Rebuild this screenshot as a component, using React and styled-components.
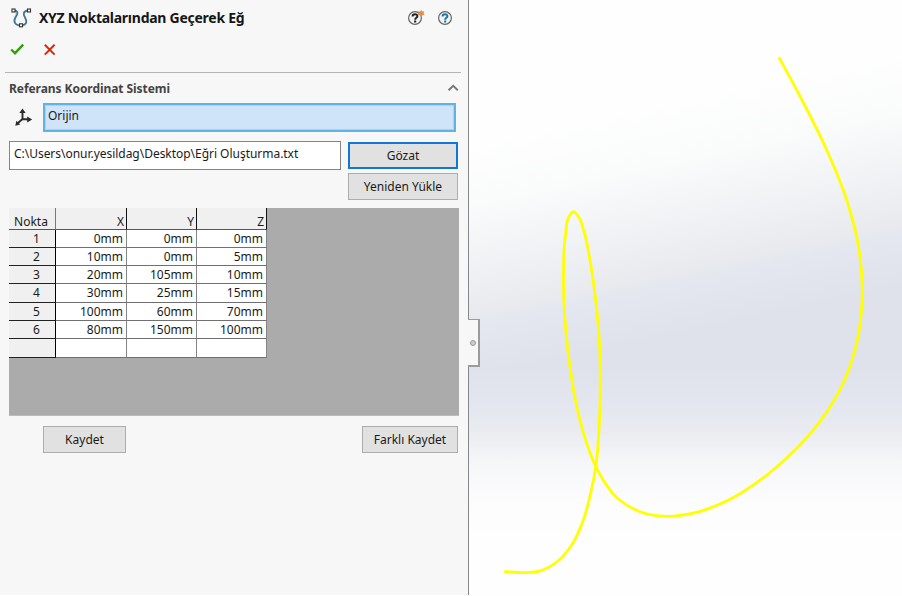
import React, { useState } from 'react'
import styled, { createGlobalStyle } from 'styled-components'

const GlobalStyle = createGlobalStyle`
  * {
    box-sizing: border-box;
  }

  body {
    margin: 0;
    background: #fff;
    font-family: "Noto Sans", "Open Sans", sans-serif;
    font-size: 12px;
    color: #1a1a1a;
    overflow: hidden;
  }
`

const Window = styled.div`
  display: flex;
  width: 902px;
  height: 596px;
`

const Panel = styled.section`
  width: 469px;
  height: 595px;
  background: #f7f7f7;
  border-right: 1px solid #85878a;
`

const Header = styled.header`
  display: flex;
  align-items: center;
  height: 36px;
  padding-left: 10px;
`

const Title = styled.h1`
  flex: 1;
  margin: 0 0 0 7px;
  font-size: 14px;
  line-height: 20px;
  font-weight: 700;
  letter-spacing: ${(props) => props.$spacing};
  white-space: nowrap;
  color: #161616;
`

const HelpIcons = styled.div`
  display: flex;
  gap: 10px;
  padding: 0 12px 2px 0;
`

const Actions = styled.div`
  display: flex;
  gap: 18px;
  height: 37px;
  margin: 0 7px 0 5px;
  padding: 6px 0 0 5px;
  border-bottom: 1px solid #b5b5b5;
`

const IconButton = styled.button`
  width: 15px;
  height: 15px;
  padding: 0;
  border: 0;
  background: none;
  line-height: 0;
`

const SectionTitle = styled.div`
  display: flex;
  align-items: center;
  justify-content: space-between;
  height: 30px;
  padding: 0 9px;
  font-weight: 700;
  letter-spacing: -0.06px;
  color: #444;
`

const SystemRow = styled.div`
  display: flex;
  align-items: center;
  gap: 10px;
  height: 29px;
  padding-left: 14px;
`

const Selection = styled.div`
  width: 413px;
  height: 29px;
  padding: 1px 3px;
  border: 2px solid #62b3e4;
  box-shadow: inset 0 0 0 1px #a9d3f2;
  background: #cfe4f8;
  line-height: 19px;
`

const FileRow = styled.div`
  display: flex;
  align-items: flex-start;
  gap: 7px;
  margin: 9px 10px 0 9px;
`

const FileName = styled.div`
  width: 332px;
  height: 29px;
  padding: 2px 4px;
  border: 1px solid #858585;
  background: #fff;
  line-height: 19px;
  letter-spacing: ${(props) => props.$spacing};
  white-space: nowrap;
`

const FileButtons = styled.div`
  display: flex;
  flex-direction: column;
  gap: 4px;
  padding-top: 1px;
`

const Button = styled.button`
  width: ${(props) => props.$width}px;
  height: 27px;
  padding: 0;
  border: ${(props) => (props.$focused ? '2px solid #1177d7' : '1px solid #adadad')};
  background: #e1e1e1;
  font: inherit;
  color: inherit;
  line-height: 22px;
`

const GridArea = styled.div`
  width: 450px;
  height: 208px;
  margin: 8px 0 0 9px;
  background: #ababab;
  border-bottom: 1px solid #bcbcbc;
`

const GridRow = styled.div`
  display: grid;
  grid-template-columns: 47px 71px 70px 70px;
  grid-template-rows: 100%;
  width: 258px;
  height: ${(props) => props.$height}px;
`

const HeadCell = styled.div`
  padding: 5px 2px 0 0;
  text-align: ${(props) => (props.$label ? 'center' : 'right')};
  line-height: 17px;
  background: #f0f0f0;
  border-right: 1px solid ${(props) => (props.$label ? '#777' : '#111')};
  border-bottom: 1px solid #555;
`

const IndexCell = styled.div`
  padding-left: 9px;
  text-align: center;
  line-height: 18px;
  background: #f0f0f0;
  border-right: 1px solid #000;
  border-bottom: 1px solid #222;
`

const Cell = styled.div`
  padding-right: 3px;
  text-align: right;
  line-height: 18px;
  background: #fff;
  border-right: 1px solid #858585;
  border-bottom: 1px solid #707070;
`

const Footer = styled.footer`
  display: flex;
  justify-content: space-between;
  margin: 10px 10px 0 43px;
`

const Viewport = styled.main`
  position: relative;
  flex: 1;
  background:
    linear-gradient(
      180deg,
      transparent 368px,
      #dfe2eb 368px,
      #e3e6ef 402px,
      #e9ebf0 430px,
      #f6f7f9 465px,
      #fcfcfd 501px,
      #fefefe 540px
    ),
    linear-gradient(
      168deg,
      #fefefe 140px,
      #fafbfb 200px,
      #f0f1f4 265px,
      #e8eaee 308px,
      #e4e7f0 322px,
      #dfe2eb 370px
    );

  > svg {
    display: block;
  }
`

const SplitterHandle = styled.div`
  position: absolute;
  left: -1px;
  top: 319px;
  display: flex;
  align-items: center;
  justify-content: center;
  width: 12px;
  height: 48px;
  border: solid #9b9b9b;
  border-width: 1px 2px 2px 0;
  background: #f7f7f7;
`

const SplitterDot = styled.span`
  width: 6px;
  height: 6px;
  border: 1.5px solid #999;
  border-radius: 50%;
  background: #ccc;
`

const points = [
  ['0mm', '0mm', '0mm'],
  ['10mm', '0mm', '5mm'],
  ['20mm', '105mm', '10mm'],
  ['30mm', '25mm', '15mm'],
  ['100mm', '60mm', '70mm'],
  ['80mm', '150mm', '100mm'],
  ['', '', ''],
]

const rowHeights = [18, 18, 18, 19, 18, 18, 19]

// points on screen that the curve passes through
const track = [
  [504.3, 571.5], [525, 572.6], [540, 570.8], [556.7, 562], [571.7, 545], [583.3, 520],
  [591, 491.7], [595.9, 465.7], [599, 430], [600.3, 383], [599.3, 340], [596, 303],
  [590, 260], [583.6, 230], [578.6, 216.8], [573.3, 211.6], [568.9, 216.8], [565.6, 234],
  [563.5, 283], [565.2, 323],
  [569.5, 363], [576, 403], [585, 438], [597, 469], [616.7, 497.5], [640, 511.7],
  [666.7, 516.3], [693.3, 513.2], [720, 504], [770, 472.5], [800, 445], [826.7, 412],
  [845, 379], [857.3, 340], [862.3, 289], [857.3, 240], [846, 198], [826.7, 150],
  [801.7, 99.5], [778.8, 57.2],
]

const dist = (a, b) => Math.hypot(b[0] - a[0], b[1] - a[1])

// slope at q, weighted by the distance to its neighbours
const tangent = (p, q, r) => {
  const d1 = dist(p, q)
  const d2 = dist(q, r)
  if (!d1 || !d2) return [0, 1].map((k) => (r[k] - p[k]) / (d1 + d2))
  return [0, 1].map((k) => (((q[k] - p[k]) / d1) * d2 + ((r[k] - q[k]) / d2) * d1) / (d1 + d2))
}

const toPath = (pts) => {
  const p = pts.map(([x, y]) => [x - 469, y])
  const t = p.map((q, i) => tangent(p[i - 1] || q, q, p[i + 1] || q))
  let d = `M${p[0].join(' ')}`
  for (let i = 0; i < p.length - 1; i++) {
    const h = dist(p[i], p[i + 1]) / 3
    const c1 = p[i].map((v, k) => (v + t[i][k] * h).toFixed(2))
    const c2 = p[i + 1].map((v, k) => (v - t[i + 1][k] * h).toFixed(2))
    d += ` C${c1.join(' ')} ${c2.join(' ')} ${p[i + 1].join(' ')}`
  }
  return d
}

const CurveIcon = () => (
  <svg width="22" height="20" viewBox="0 0 22 20" fill="none">
    <path d="M4 2.5C8.8 3 7.7 6 5.7 9C3.2 13 4 17 11 17.5C17.7 16.5 17 13 15 9.5C13 6 13 3 18.5 2.5" stroke="#3d7690" strokeWidth="1.8" />
    <path d="M5 3.8C7.3 4.5 5.6 7 4.3 9.5" stroke="#8fc0d4" strokeWidth="0.7" />
    <g fill="#fff" stroke="#333" strokeWidth="1.1">
      <rect x="2" y="1" width="3" height="3" />
      <rect x="17.5" y="1" width="3" height="3" />
      <rect x="9.5" y="15.8" width="3" height="3" />
    </g>
  </svg>
)

const HelpIcon = ({ color, spark }) => (
  <svg width="20" height="18" viewBox="0 0 20 18" fill="none">
    <circle cx="9" cy="10" r="6.4" fill="#f3f3f3" stroke="#666" strokeWidth="1.2" />
    <path d="M6.6 8.4C6.6 5.4 11.5 5.5 11.4 8.2C11.3 9.8 9.2 9.8 9.2 11.7" stroke={color} strokeWidth="2" />
    <rect x="8.1" y="12.5" width="2.1" height="2" fill={color} />
    {spark && (
      <path d="M15.2 1.8L16.2 3.5L18.3 3.2L17.6 5.2L18.6 6.8L16.5 7.2L15.2 9L13.9 7.2L11.8 6.8L12.8 5.2L12.1 3.2L14.2 3.5Z" fill="#dc9248" />
    )}
  </svg>
)

const CheckIcon = () => (
  <svg width="15" height="15" viewBox="0 0 15 15" fill="none">
    <path d="M1.2 7.5L5 11.2L13.2 2.6" stroke="#339f0b" strokeWidth="2.4" />
  </svg>
)

const CancelIcon = () => (
  <svg width="15" height="15" viewBox="0 0 15 15" fill="none">
    <path d="M1.8 2.8L11.6 12.6M11.6 2.8L1.8 12.6" stroke="#dc2708" strokeWidth="2" />
  </svg>
)

const AxesIcon = () => (
  <svg width="19" height="19" viewBox="0 0 19 19" fill="none">
    <path d="M8.5 4V11L15 11.5M8.5 11L4 15" stroke="#2b2b2b" strokeWidth="1.9" />
    <path d="M8.5 0.5L11.7 5H5.3ZM18.2 11.5L13.2 8.5V14.5ZM1.3 17.7L2.4 12.8L6.2 16.6Z" fill="#2b2b2b" />
  </svg>
)

const CollapseIcon = ({ open }) => (
  <svg width="12" height="8" viewBox="0 0 12 8" fill="none">
    <path d={open ? 'M1.5 6.3L6.2 1.8L10.8 6.3' : 'M1.5 1.8L6.2 6.3L10.8 1.8'} stroke="#777" strokeWidth="1.9" />
  </svg>
)

const PointGrid = () => (
  <GridArea>
    <GridRow $height={22}>
      <HeadCell $label>Nokta</HeadCell>
      <HeadCell>X</HeadCell>
      <HeadCell>Y</HeadCell>
      <HeadCell>Z</HeadCell>
    </GridRow>
    {points.map((point, i) => (
      <GridRow key={i} $height={rowHeights[i]}>
        <IndexCell>{point[0] && i + 1}</IndexCell>
        {point.map((value, axis) => (
          <Cell key={axis}>{value}</Cell>
        ))}
      </GridRow>
    ))}
  </GridArea>
)

const App = () => {
  const [open, setOpen] = useState(true)

  return (
    <>
      <GlobalStyle />
      <Window>
        <Panel>
          <Header>
            <CurveIcon />
            <Title $spacing="-0.26px">XYZ Noktalarından Geçerek Eğ</Title>
            <HelpIcons>
              <HelpIcon color="#222" spark />
              <HelpIcon color="#1b75a5" />
            </HelpIcons>
          </Header>
          <Actions>
            <IconButton><CheckIcon /></IconButton>
            <IconButton><CancelIcon /></IconButton>
          </Actions>
          <SectionTitle onClick={() => setOpen(!open)}>
            Referans Koordinat Sistemi
            <CollapseIcon open={open} />
          </SectionTitle>
          {open && (
            <>
              <SystemRow>
                <AxesIcon />
                <Selection>Orijin</Selection>
              </SystemRow>
              <FileRow>
                <FileName $spacing="-0.03px">C:\Users\onur.yesildag\Desktop\Eğri Oluşturma.txt</FileName>
                <FileButtons>
                  <Button $width={110} $focused>Gözat</Button>
                  <Button $width={110}>Yeniden Yükle</Button>
                </FileButtons>
              </FileRow>
              <PointGrid />
              <Footer>
                <Button $width={83}>Kaydet</Button>
                <Button $width={96}>Farklı Kaydet</Button>
              </Footer>
            </>
          )}
        </Panel>
        <Viewport>
          <svg width="433" height="596" viewBox="0 0 433 596" fill="none">
            <path d={toPath(track)} stroke="#ffff00" strokeWidth="2.8" />
          </svg>
          <SplitterHandle>
            <SplitterDot />
          </SplitterHandle>
        </Viewport>
      </Window>
    </>
  )
}

export default App
